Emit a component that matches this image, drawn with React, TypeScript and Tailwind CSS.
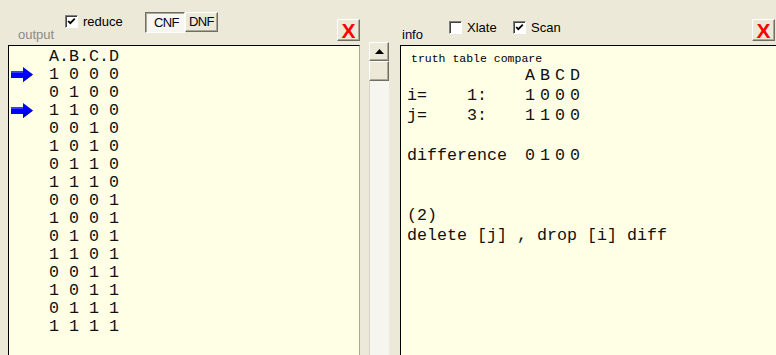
import React from "react";

const rows = [
  { bits: "1 0 0 0", mark: true },
  { bits: "0 1 0 0" },
  { bits: "1 1 0 0", mark: true },
  { bits: "0 0 1 0" },
  { bits: "1 0 1 0" },
  { bits: "0 1 1 0" },
  { bits: "1 1 1 0" },
  { bits: "0 0 0 1" },
  { bits: "1 0 0 1" },
  { bits: "0 1 0 1" },
  { bits: "1 1 0 1" },
  { bits: "0 0 1 1" },
  { bits: "1 0 1 1" },
  { bits: "0 1 1 1" },
  { bits: "1 1 1 1" },
];

const raised =
  "bg-[#ECE9D8] border border-t-white border-l-white border-b-[#716F64] border-r-[#716F64] shadow-[inset_-1px_-1px_0_#ACA899]";

const Arrow = () => (
  <svg width="23" height="16" viewBox="0 0 23 16">
    <rect x="0" y="4" width="13" height="7" fill="#0000ff" />
    <rect x="0" y="4" width="13" height="2" fill="#3a3aff" />
    <polygon points="12,0 22,7.5 12,15" fill="#0000ff" />
    <polygon points="12,10 22,7.5 12,15" fill="#0000d8" />
  </svg>
);

const Check = ({ checked, label }: { checked?: boolean; label: string }) => (
  <div className="flex items-center gap-[5px]">
    <div className="w-[13px] h-[13px] bg-white border border-t-[#808080] border-l-[#808080] border-b-white border-r-white shadow-[inset_1px_1px_0_#404040] flex items-center justify-center">
      {checked && (
        <svg width="9" height="9" viewBox="0 0 9 9">
          <polyline points="1.2,4 3.3,6.2 7.8,1.6" fill="none" stroke="#000" strokeWidth="1.8" />
        </svg>
      )}
    </div>
    <span className="text-[13px] leading-[13px] text-black">{label}</span>
  </div>
);

const CloseBtn = () => (
  <div className={`w-[23px] h-[22px] flex items-center justify-center ${raised}`}>
    <span className="text-[21px] leading-[21px] font-bold text-[#ff0000]">X</span>
  </div>
);

export default function App() {
  return (
    <div className="w-[776px] h-[355px] bg-[#ECE9D8] flex overflow-hidden font-['Liberation_Sans',Arial,sans-serif]">
      {/* output side */}
      <div className="w-[360px] shrink-0 pl-[8px] flex flex-col">
        <div className="h-[45px] shrink-0 flex items-start">
          <span className="ml-[10px] mt-[27px] w-[47px] text-[13px] leading-[15px] text-[#8a8a8a]">output</span>
          <div className="mt-[15px] w-[80px]">
            <Check checked label="reduce" />
          </div>
          <div className="mt-[12px] flex">
            <div className="w-[40px] h-[21px] bg-[#F7F6F1] border border-t-[#716F64] border-l-[#716F64] border-b-white border-r-white shadow-[inset_1px_1px_0_#ACA899] flex items-center justify-center pl-[3px] pt-[1px]">
              <span className="text-[13px] tracking-[-0.6px] text-[#000020]">CNF</span>
            </div>
            <div className={`w-[33px] h-[20px] flex items-center justify-center ${raised}`}>
              <span className="text-[13px] tracking-[-0.6px] text-[#000020]">DNF</span>
            </div>
          </div>
          <div className="ml-auto mt-[19px]">
            <CloseBtn />
          </div>
        </div>
        <div className="flex-1 bg-[#FFFFE6] border-l border-t border-black border-r border-r-[#ACA899] pt-[1px] font-['Liberation_Mono','Courier_New',monospace] text-[16.67px] text-[#111] whitespace-pre">
          <div className="pl-[40px] leading-[19px]">A.B.C.D</div>
          {rows.map((r, i) => (
            <div key={i} className="flex h-[18px] leading-[18px]">
              <div className="w-[40px] pl-[2px] pt-[1px]">{r.mark && <Arrow />}</div>
              <span>{r.bits}</span>
            </div>
          ))}
        </div>
      </div>

      {/* scrollbar gutter */}
      <div className="w-[40px] shrink-0 pl-[9px] pt-[42px] flex">
        <div className="w-[20px] flex flex-col">
          <div className={`h-[19px] flex items-center justify-center ${raised}`}>
            <svg width="9" height="5" viewBox="0 0 9 5">
              <polygon points="4.5,0 9,5 0,5" fill="#000" />
            </svg>
          </div>
          <div className={`h-[20px] ${raised}`} />
          <div className="flex-1 bg-[#F6F5F0] border-l border-[#D8D5C8]" />
        </div>
      </div>

      {/* info side */}
      <div className="flex-1 flex flex-col">
        <div className="h-[45px] shrink-0 flex items-start">
          <span className="ml-[2px] mt-[27px] w-[47px] text-[13px] leading-[15px] text-[#000030]">info</span>
          <div className="mt-[21px] w-[64px]">
            <Check label="Xlate" />
          </div>
          <div className="mt-[21px]">
            <Check checked label="Scan" />
          </div>
          <div className="ml-auto mr-[1px] mt-[19px]">
            <CloseBtn />
          </div>
        </div>
        <div className="flex-1 bg-[#FFFFE6] border-l border-t border-black pl-[6px] pt-[7px] font-['Liberation_Mono','Courier_New',monospace] text-[16.67px] leading-[20px] text-[#111] whitespace-pre">
          <div className="ml-[4px] text-[11.5px] leading-[12.5px] text-black">truth table compare</div>
          <div className="flex">
            <span className="w-[118px]"></span>
            <span className="tracking-[5px]">ABCD</span>
          </div>
          <div className="flex">
            <span className="w-[118px]">{"i=    1:"}</span>
            <span className="tracking-[5px]">1000</span>
          </div>
          <div className="flex">
            <span className="w-[118px]">{"j=    3:"}</span>
            <span className="tracking-[5px]">1100</span>
          </div>
          <div>&nbsp;</div>
          <div className="flex">
            <span className="w-[118px]">difference</span>
            <span className="tracking-[5px]">0100</span>
          </div>
          <div>&nbsp;</div>
          <div>&nbsp;</div>
          <div>(2)</div>
          <div>delete [j] , drop [i] diff</div>
        </div>
      </div>
    </div>
  );
}
